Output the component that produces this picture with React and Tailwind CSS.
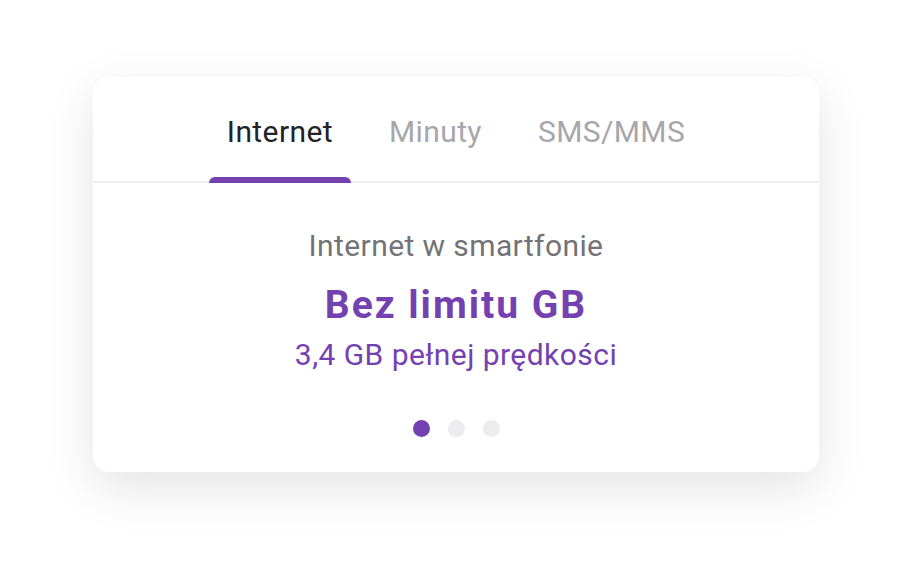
import React from "react";

export default function App() {
  const tabs = ["Internet", "Minuty", "SMS/MMS"];
  return (
    <div
      className="w-full h-[586px] bg-white flex justify-center"
      style={{ fontFamily: "Roboto, 'Noto Sans', sans-serif" }}
    >
      <div className="mt-[77px] w-[726px] h-[395px] bg-white rounded-[16px] shadow-[0_16px_50px_rgba(0,0,0,0.11)] flex flex-col">
        <div className="h-[106px] border-b-2 border-[#eeeeee] flex justify-center gap-[20px] shrink-0">
          {tabs.map((t, i) => (
            <div key={t} className="relative px-[18px] pt-[37px]">
              <span
                className={
                  "block text-[30px] leading-[36px] tracking-[0.4px] " +
                  (i === 0 ? "text-[#222228]" : "text-[#a7a7ab]")
                }
              >
                {t}
              </span>
              {i === 0 && (
                <div className="absolute left-0 right-0 bottom-[-2px] h-[6px] rounded-t-[6px] bg-[#7442b0]" />
              )}
            </div>
          ))}
        </div>
        <div className="flex flex-col items-center pt-[45px]">
          <div className="text-[30px] leading-[36px] tracking-[0.4px] text-[#737377]">Internet w smartfonie</div>
          <div className="mt-[19px] text-[39px] leading-[44px] font-bold tracking-[2px] text-[#7442b0]">Bez limitu GB</div>
          <div className="mt-[10px] text-[30px] leading-[36px] tracking-[0.45px] text-[#7442b0]">3,4 GB pełnej prędkości</div>
          <div className="mt-[47px] flex gap-[18px]">
            <div className="w-[17px] h-[17px] rounded-full bg-[#7442b0]" />
            <div className="w-[17px] h-[17px] rounded-full bg-[#ececef]" />
            <div className="w-[17px] h-[17px] rounded-full bg-[#ececef]" />
          </div>
        </div>
      </div>
    </div>
  );
}
